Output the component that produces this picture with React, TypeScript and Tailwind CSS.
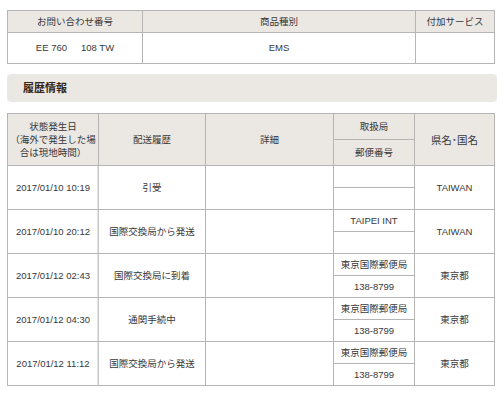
const font = "font-['Liberation_Sans','Noto_Sans_CJK_JP',sans-serif]";

const rows = [
  { date: "2017/01/10 10:19", status: "引受", office: "", zip: "", region: "TAIWAN" },
  { date: "2017/01/10 20:12", status: "国際交換局から発送", office: "TAIPEI INT", zip: "", region: "TAIWAN" },
  { date: "2017/01/12 02:43", status: "国際交換局に到着", office: "東京国際郵便局", zip: "138-8799", region: "東京都" },
  { date: "2017/01/12 04:30", status: "通関手続中", office: "東京国際郵便局", zip: "138-8799", region: "東京都" },
  { date: "2017/01/12 11:12", status: "国際交換局から発送", office: "東京国際郵便局", zip: "138-8799", region: "東京都" },
];

const th = "border border-[#b5b5b5] bg-[#ebe7e3] font-normal text-center align-middle p-0";
const td = "border border-[#b5b5b5] bg-white text-center align-middle p-0";

export default function App() {
  return (
    <div className={`w-[504px] h-[396px] bg-white text-[#383838] text-[9.5px] leading-[12px] ${font} pt-[10px] px-[7px] overflow-hidden`}>
      <table className="w-[487px] border-collapse table-fixed">
        <colgroup>
          <col className="w-[135px]" />
          <col className="w-[273px]" />
          <col className="w-[79px]" />
        </colgroup>
        <thead>
          <tr className="h-[22px]">
            <th className={th}>お問い合わせ番号</th>
            <th className={th}>商品種別</th>
            <th className={th}>付加サービス</th>
          </tr>
        </thead>
        <tbody>
          <tr className="h-[31px]">
            <td className={td}>
              <span>EE 760</span>
              <span className="ml-[14px]">108 TW</span>
            </td>
            <td className={td}>EMS</td>
            <td className={td}></td>
          </tr>
        </tbody>
      </table>

      <div className="mt-[10px] h-[28px] rounded-[4px] bg-[#ebe7e3] flex items-center pl-[16px] text-[11px] font-bold text-[#33261a]">
        履歴情報
      </div>

      <table className="mt-[11px] w-[487px] border-collapse table-fixed">
        <colgroup>
          <col className="w-[91px]" />
          <col className="w-[107px]" />
          <col className="w-[128px]" />
          <col className="w-[81px]" />
          <col className="w-[80px]" />
        </colgroup>
        <thead>
          <tr className="h-[26px]">
            <th rowSpan={2} className={`${th} leading-[13px]`}>
              状態発生日
              <br />
              （海外で発生した場
              <br />
              合は現地時間）
            </th>
            <th rowSpan={2} className={th}>配送履歴</th>
            <th rowSpan={2} className={th}>詳細</th>
            <th className={th}>取扱局</th>
            <th rowSpan={2} className={`${th} text-[10.5px]`}>県名･国名</th>
          </tr>
          <tr className="h-[26px]">
            <th className={th}>郵便番号</th>
          </tr>
        </thead>
        <tbody>
          {rows.map((r) => (
            <RowPair key={r.date} {...r} />
          ))}
        </tbody>
      </table>
    </div>
  );
}

function RowPair({ date, status, office, zip, region }: (typeof rows)[number]) {
  return (
    <>
      <tr className="h-[22px]">
        <td rowSpan={2} className={`${td} border-r-[#c8c8c8] shadow-[inset_-1px_0_0_#e2e2e2]`}>{date}</td>
        <td rowSpan={2} className={td}>{status}</td>
        <td rowSpan={2} className={td}></td>
        <td className={td}>{office}</td>
        <td rowSpan={2} className={td}>{region}</td>
      </tr>
      <tr className="h-[22px]">
        <td className={td}>{zip}</td>
      </tr>
    </>
  );
}
